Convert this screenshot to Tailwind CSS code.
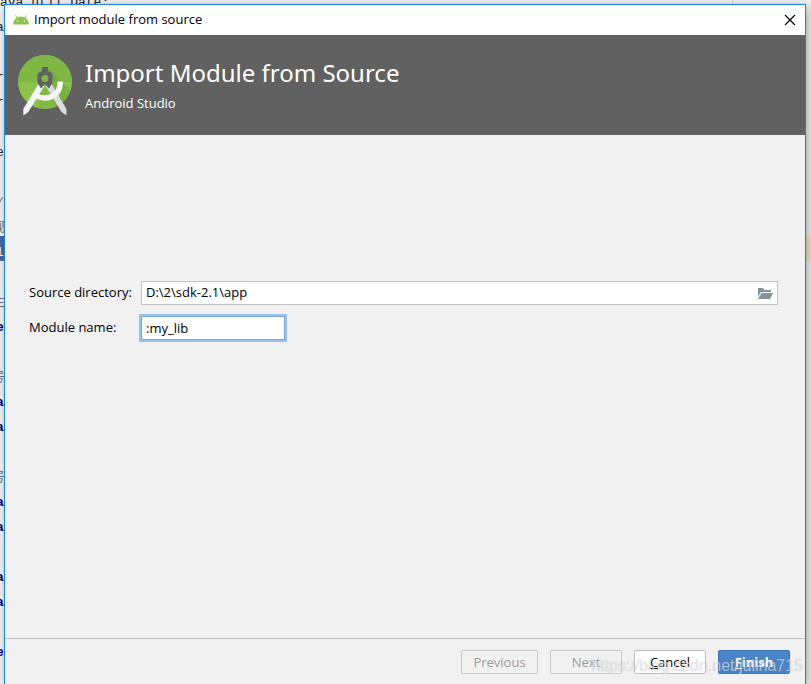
<!DOCTYPE html>
<html lang="en">
<head>
<meta charset="utf-8">
<title>Import module from source</title>
<script src="https://cdn.jsdelivr.net/npm/@tailwindcss/browser@4"></script>
</head>
<body class="relative flex h-screen flex-col overflow-hidden bg-[#f5f5f5] pt-1 pr-[5px] pl-1 font-['Open_Sans','Noto_Sans_CJK_SC',sans-serif] text-[13px] text-black">

  <!-- Editor behind the dialog -->
  <div aria-hidden="true" class="absolute inset-x-0 -top-[14px] bottom-0 -z-10 overflow-hidden whitespace-nowrap font-['Liberation_Mono','Noto_Sans_CJK_SC',monospace] text-[13px] leading-[33px] text-[#222] *:h-[25px]">
    <div class="mr-[78px] border-r border-[#d0d0d0]">ava.util.Date;</div>
    <div class="-ml-1">a</div>
    <div></div>
    <div class="-ml-1">r</div>
    <div class="-ml-1">r</div>
    <div></div>
    <div class="-ml-1">e</div>
    <div></div>
    <div class="-ml-1 text-gray-500">/</div>
    <div class="-ml-2 text-gray-500">现</div>
    <div class="flex bg-[#f5edcf]"><span class="w-4 bg-[#4769ab] text-white"><span class="-ml-1">l</span></span></div>
    <div></div>
    <div class="-ml-2 text-gray-500">主</div>
    <div class="-ml-1 font-bold text-[#000080]">e</div>
    <div></div>
    <div class="-ml-2 text-gray-500">号</div>
    <div class="-ml-1 font-bold text-[#000080]">a</div>
    <div class="-ml-1 font-bold text-[#000080]">a</div>
    <div></div>
    <div class="-ml-2 text-gray-500">号</div>
    <div class="-ml-1 font-bold text-[#000080]">a</div>
    <div class="-ml-1 font-bold text-[#000080]">a</div>
    <div></div>
    <div class="-ml-1 font-bold text-[#000080]">a</div>
    <div class="-ml-1 font-bold text-[#000080]">a</div>
    <div></div>
    <div class="-ml-1 font-bold text-[#000080]">e</div>
  </div>

  <main class="flex flex-1 flex-col border border-b-0 border-[#1883d7] bg-[#f1f1f1] shadow-[2px_2px_10px_rgba(0,0,0,0.35)]">
    <div class="flex h-[30px] shrink-0 items-center bg-white pr-[7px] pl-2">
      <svg class="mr-[5px] h-[10px] w-4" viewBox="0 0 16 10" aria-hidden="true">
        <path d="M0 9.500a8 8 0 0 1 16 0z" fill="#8fc251"/>
        <path d="M2.500 .4 4.600 3.600M13.500 .4l-2.100 3.200" stroke="#8fc251" stroke-width="1"/>
        <circle cx="4.600" cy="6" r=".8" fill="#fff"/><circle cx="11.400" cy="6" r=".8" fill="#fff"/>
      </svg>
      <span class="flex-1">Import module from source</span>
      <button type="button" aria-label="Close" class="flex size-4 items-center justify-center">
        <svg class="size-3" viewBox="0 0 12 12"><path d="m1 1 10 10M11 1 1 11" stroke="#000" stroke-width="1.2"/></svg>
      </button>
    </div>

    <header class="flex h-[100px] shrink-0 items-start bg-[#616161] pt-5 pl-[13px] text-white">
      <svg class="mr-[13px] h-[62px] w-[54px]" viewBox="0 0 54 62" aria-hidden="true">
        <defs><clipPath id="disc"><circle cx="27" cy="27" r="27"/></clipPath></defs>
        <circle cx="27" cy="27" r="27" fill="#8bc34a"/>
        <g clip-path="url(#disc)">
          <path d="M0 0h54v27H0z" fill="#80b744"/>
          <path d="M30 13 54 37v20H40L27 28z" fill="#689f38" opacity=".5"/>
          <path d="M21 33h12l12 24H21z" fill="#7cb342" opacity=".6"/>
        </g>
        <path d="m28 31.500 5-3.500L48.500 54v6.500l-5-3.500z" fill="#dcdce0"/>
        <path d="m26 31.500-5-3.500L5.300 54v6.500l5-3.500z" fill="#f5f5f5"/>
        <path d="M15.500 38.500C26 47 42.300 43 42.300 26.500" fill="none" stroke="#f5f5f5" stroke-width="5.400"/>
        <path fill="#616161" d="M24 12h6v4.500h2l2.500 3v8.500L31 33.500l-4-4.500-4 4.500-3.500-5.500v-8.500l2.500-3h2z"/>
        <circle cx="27" cy="23.500" r="3.500" fill="#80b744"/>
      </svg>
      <div>
        <h1 class="font-['Noto_Sans',sans-serif] text-2xl leading-9">Import Module from Source</h1>
        <p class="leading-6">Android Studio</p>
      </div>
    </header>

    <form id="wizard" class="grid flex-1 grid-cols-[112px_1fr] content-start items-center gap-y-[11px] pt-[146px] pr-[27px] pl-6">
      <label for="source">Source directory:</label>
      <div class="flex h-6 items-center border border-[#c2c2c2] bg-white pr-1 pl-1">
        <input id="source" type="text" value="D:\2\sdk-2.1\app" class="min-w-0 flex-1 bg-transparent outline-none">
        <button type="button" aria-label="Browse" class="h-3 w-4">
          <svg class="h-3 w-4" viewBox="0 0 16 12"><path d="M1 10V1h5l1.500 2H14v2H4z" fill="#87939a"/><path d="M4.500 6H16l-3 6H1z" fill="#87939a"/></svg>
        </button>
      </div>
      <label for="module">Module name:</label>
      <input id="module" type="text" value=":my_lib" class="h-6 w-36 border border-[#7ba7dc] bg-white px-1 ring-2 ring-[#97c3f3] outline-none">
    </form>

    <footer class="flex shrink-0 justify-end gap-3 border-t border-[#c0c0c0] px-[15px] pt-[11px] pb-[10px] *:pt-0.5">
      <button type="button" disabled class="h-6 w-[77px] rounded-[2px] border border-[#c8c8c8] text-[#9b9b9b]">Previous</button>
      <button type="button" disabled class="h-6 w-[72px] rounded-[2px] border border-[#c8c8c8] text-[#9b9b9b]">Next</button>
      <button type="button" class="h-6 w-[72px] rounded-[2px] border border-[#bdbdbd] bg-white"><u>C</u>ancel</button>
      <button type="submit" form="wizard" class="h-6 w-[72px] rounded-[2px] border border-[#3c74b5] bg-[#4a86c7] font-bold text-white"><u>F</u>inish</button>
    </footer>
  </main>

  <div class="pointer-events-none absolute right-2 bottom-2 font-['Liberation_Sans',sans-serif] text-base leading-5 text-white/60 [text-shadow:0_0_1px_rgba(0,0,0,0.25)]">https://blog.csdn.net/julina715</div>
</body>
</html>
